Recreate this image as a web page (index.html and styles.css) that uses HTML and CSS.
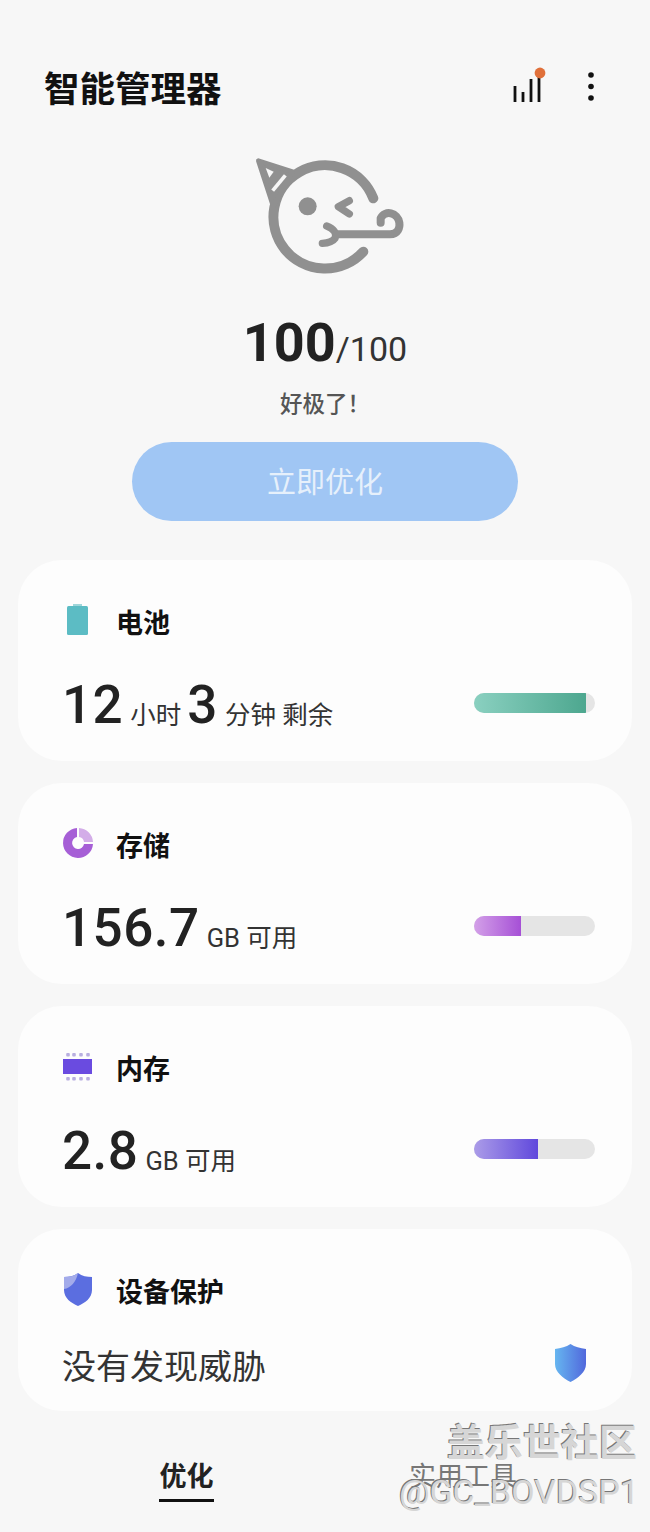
FILE: index.html
```html
<!DOCTYPE html>
<html lang="en">

<head>
    <meta charset="UTF-8">
    <meta name="viewport" content="width=device-width, initial-scale=1.0">
    <title>智能管理器</title>
    <link rel="stylesheet" href="styles.css">
</head>

<body>

    <div class="top">
        <h1>智能管理器</h1>
        <div class="top-icons">
            <svg width="36" height="40" viewBox="0 0 36 40">
                <g stroke="#111" stroke-width="2.800" fill="none">
                    <path d="M3 20V36" />
                    <path d="M11 26V36" />
                    <path d="M19 13V36" />
                    <path d="M27 7V36" />
                </g>
                <circle cx="28" cy="7" r="5.400" fill="#e0703a" />
            </svg>
            <svg width="8" height="30" viewBox="0 0 8 30">
                <circle cx="4" cy="4" r="2.800" fill="#111" />
                <circle cx="4" cy="15.500" r="2.800" fill="#111" />
                <circle cx="4" cy="27" r="2.800" fill="#111" />
            </svg>
        </div>
    </div>

    <div class="status">
        <svg class="face" width="152" height="120" viewBox="72 48 456 360">
            <g fill="none" stroke="#909090" stroke-linecap="round" stroke-linejoin="round">
                <path d="M430 175A155 155 0 1 0 400 335" stroke-width="30" />
                <path d="M85 62L188 95L130 200Z" fill="#909090" stroke-width="14" />
                <path d="M358 182L325 200L358 222" stroke-width="22" />
                <path d="M290 258C310 265 322 280 315 295C308 305 295 309 277 310" stroke-width="22" />
                <path d="M318 283H480C505 283 510 262 508 248C503 218 465 208 452 235V248" stroke-width="24" />
            </g>
            <path d="M107 84L131 95L118 113Z" fill="#f7f7f7" />
            <path d="M166 106L128 152" stroke="#f7f7f7" stroke-width="11" />
            <circle cx="233" cy="199" r="27" fill="#909090" />
        </svg>
        <div class="score"><b>100</b>/100</div>
        <div class="remark">好极了！</div>
        <div class="optimize">立即优化</div>
    </div>

    <div class="cards">
        <div class="card">
            <div class="card-title">
                <span class="icon">
                    <svg width="22" height="32" viewBox="0 0 22 32">
                        <rect x="6" y="0" width="9" height="5" fill="#9fd6da" />
                        <rect x="0" y="2" width="21" height="29" rx="1.500" fill="#5cbcc4" />
                    </svg>
                </span>
                电池
            </div>
            <div class="card-row">
                <div class="value"><b>12</b><span>小时</span><b class="num-mid">3</b><span>分钟 剩余</span></div>
                <div class="bar"><div class="fill fill-green"></div></div>
            </div>
        </div>

        <div class="card">
            <div class="card-title">
                <span class="icon">
                    <svg width="32" height="32" viewBox="0 0 32 32">
                        <path d="M15 1A15 15 0 1 0 31 17H22A6 6 0 1 1 15 10Z" fill="#a65fd6" />
                        <path d="M17 1A15 15 0 0 1 31 15H22A6 6 0 0 0 17 10Z" fill="#d3ade8" />
                    </svg>
                </span>
                存储
            </div>
            <div class="card-row">
                <div class="value"><b>156.7</b><span>GB 可用</span></div>
                <div class="bar"><div class="fill fill-purple"></div></div>
            </div>
        </div>

        <div class="card">
            <div class="card-title">
                <span class="icon">
                    <svg width="30" height="30" viewBox="0 0 30 30">
                        <rect x="0" y="8" width="29" height="15" fill="#6a4be0" />
                        <g fill="#b9afe0">
                            <rect x="3.200" y="2" width="3.600" height="3.600" rx="1" />
                            <rect x="9.200" y="2" width="3.600" height="3.600" rx="1" />
                            <rect x="16.200" y="2" width="3.600" height="3.600" rx="1" />
                            <rect x="23.200" y="2" width="3.600" height="3.600" rx="1" />
                            <rect x="3.200" y="26" width="3.600" height="3.600" rx="1" />
                            <rect x="9.200" y="26" width="3.600" height="3.600" rx="1" />
                            <rect x="16.200" y="26" width="3.600" height="3.600" rx="1" />
                            <rect x="23.200" y="26" width="3.600" height="3.600" rx="1" />
                        </g>
                    </svg>
                </span>
                内存
            </div>
            <div class="card-row">
                <div class="value"><b>2.8</b><span>GB 可用</span></div>
                <div class="bar"><div class="fill fill-violet"></div></div>
            </div>
        </div>

        <div class="card card-last">
            <div class="card-title">
                <span class="icon">
                    <svg width="28" height="33" viewBox="0 0 28 33">
                        <path d="M14 0C18 3 23 4 28 4V17C28 25 21 30 14 33C7 30 0 25 0 17V4C5 4 10 3 14 0Z" fill="#5b6ee0" />
                        <path d="M14 0C10 3 5 4 0 4V16C7 15 12 9 14 0Z" fill="#a3abea" />
                    </svg>
                </span>
                设备保护
            </div>
            <div class="card-row">
                <div class="safe">没有发现威胁</div>
                <svg class="safe-icon" width="31" height="38" viewBox="0 0 31 38">
                    <defs>
                        <linearGradient id="shield" x1="0" y1="0" x2="1" y2="0">
                            <stop offset="0" stop-color="#66b6f0" />
                            <stop offset="1" stop-color="#5168dc" />
                        </linearGradient>
                    </defs>
                    <path d="M15.500 0C20 3 25 4 31 5V20C31 28 23 34 15.500 38C8 34 0 28 0 20V5C6 4 11 3 15.500 0Z" fill="url(#shield)" />
                </svg>
            </div>
        </div>
    </div>

    <div class="tabs">
        <div class="tab active">优化</div>
        <div class="tab">实用工具</div>
    </div>

    <div class="watermark">
        <div class="wm-big">盖乐世社区</div>
        <div class="wm-small">@GC_BOVDSP1</div>
    </div>

</body>

</html>
```

FILE: styles.css
```css
* {
    box-sizing: border-box;
}

html,
body {
    margin: 0;
    padding: 0;
}

body {
    position: relative;
    width: 650px;
    height: 1532px;
    overflow: hidden;
    background-color: #f7f7f7;
    color: #222;
    font-family: Roboto, "Noto Sans CJK SC", sans-serif;
}

.top {
    display: flex;
    justify-content: space-between;
    align-items: center;
    height: 64px;
    margin-top: 54px;
    padding: 0 55px 0 44px;
}

.top h1 {
    margin: 0;
    font-size: 35.500px;
    font-weight: 700;
    color: #111;
}

.top-icons {
    display: flex;
    align-items: center;
    gap: 39px;
}

.status {
    display: flex;
    flex-direction: column;
    align-items: center;
    margin-top: 38px;
}

.face {
    margin-left: 10px;
}

.score {
    margin-top: 38px;
    height: 58px;
    line-height: 58px;
    font-size: 34px;
    color: #333;
}

.score b {
    font-size: 54px;
    font-weight: 700;
    color: #222;
}

.remark {
    margin-top: 16px;
    height: 32px;
    line-height: 32px;
    font-size: 22.500px;
    font-weight: 500;
    color: #555;
}

.optimize {
    width: 386px;
    height: 79px;
    margin-top: 22px;
    border-radius: 40px;
    background-color: #a0c6f4;
    color: #e6f0fb;
    font-size: 29px;
    line-height: 83px;
    text-align: center;
}

.cards {
    display: flex;
    flex-direction: column;
    gap: 22px;
    margin-top: 39px;
    padding: 0 18px;
}

.card {
    height: 201px;
    padding: 40px 37px 0 44px;
    border-radius: 44px;
    background-color: #fdfdfd;
}

.card-last {
    height: 182px;
}

.card-title {
    display: flex;
    align-items: center;
    height: 40px;
    padding-top: 2px;
    font-size: 27px;
    font-weight: 700;
    color: #111;
}

.icon {
    display: flex;
    justify-content: center;
    width: 32px;
    margin-top: -2px;
    margin-right: 22px;
}

.card-row {
    display: flex;
    justify-content: space-between;
    align-items: center;
    height: 62px;
    margin-top: 31.500px;
}

.card-last .card-row {
    margin-top: 23px;
}

.value {
    margin-top: 5px;
    font-size: 25.500px;
    color: #333;
}

.value b {
    font-size: 53px;
    font-weight: 500;
    color: #222;
    letter-spacing: 0.500px;
}

.value span {
    margin-left: 7px;
    vertical-align: -1px;
}

.value .num-mid {
    margin-left: 6px;
}

.bar {
    width: 121px;
    height: 20px;
    border-radius: 10px;
    overflow: hidden;
    background-color: #e5e5e5;
}

.fill {
    height: 100%;
}

.fill-green {
    width: 112px;
    background: linear-gradient(to right, #8ad0c0, #4da78f);
}

.fill-purple {
    width: 47px;
    background: linear-gradient(to right, #d3a0e8, #a650d6);
}

.fill-violet {
    width: 64px;
    background: linear-gradient(to right, #ab9ce8, #6048dc);
}

.safe {
    margin-top: 3px;
    font-size: 34px;
    color: #333;
}

.safe-icon {
    margin-right: 9px;
}

.tabs {
    display: flex;
    margin-top: 43px;
}

.tab {
    font-size: 27px;
    line-height: 46px;
    color: #777;
    text-align: center;
}

.tab.active {
    width: 55px;
    height: 48px;
    margin-left: 159px;
    border-bottom: 3px solid #111;
    font-weight: 700;
    color: #222;
    white-space: nowrap;
}

.tab:last-child {
    margin-left: 195px;
}

.watermark {
    position: absolute;
    right: 13px;
    bottom: 19px;
    text-align: right;
    color: #d6d6d6;
    text-shadow: -1px -1px 0 #777;
}

.wm-big {
    margin-bottom: 5px;
    font-size: 38px;
    font-weight: 700;
    line-height: 46px;
}

.wm-small {
    margin-right: -2px;
    font-size: 34px;
    line-height: 42px;
}
```
